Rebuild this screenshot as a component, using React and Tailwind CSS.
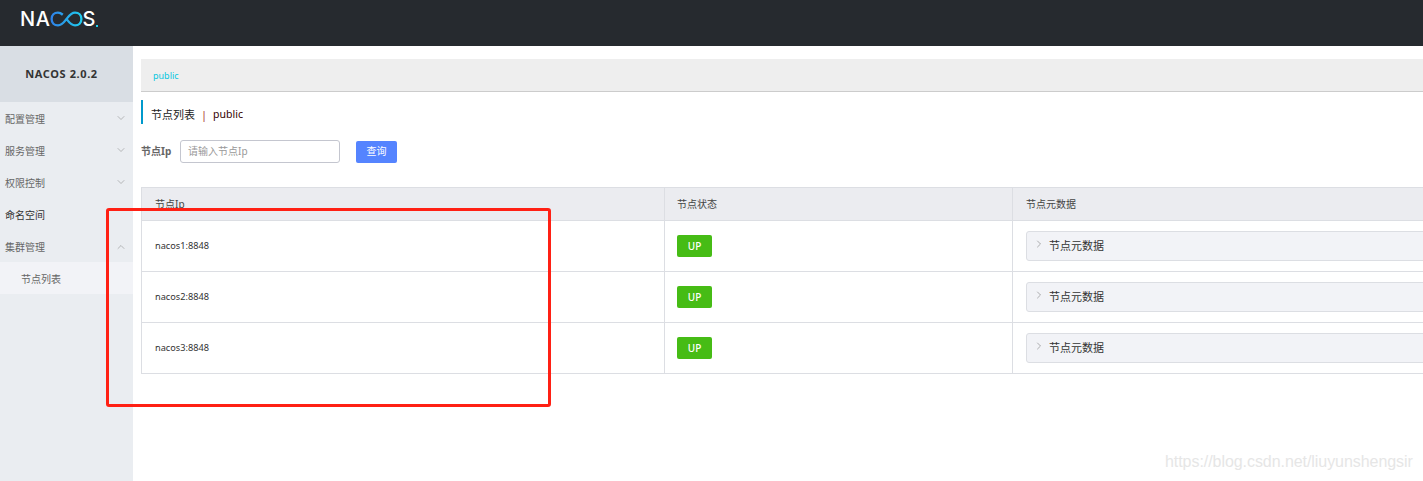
import React from "react";
import { ChevronDown, ChevronUp, ChevronRight } from "lucide-react";

const FONT = "[font-family:'Noto_Sans','Noto_Sans_CJK_SC',sans-serif]";

function Logo() {
  return (
    <div className="flex items-center h-[46px] pl-[20px] pb-[9px] text-white">
      <span className="text-[20px] leading-none font-medium tracking-[0.6px] [font-family:'Inter',sans-serif]">NA</span>
      <svg width="33" height="16" viewBox="0 0 31 15" fill="none" className="-ml-[1px]">
        <defs>
          <linearGradient id="logoG" x1="0" y1="0" x2="31" y2="0" gradientUnits="userSpaceOnUse">
            <stop offset="0" stopColor="#2f7fe8" />
            <stop offset="1" stopColor="#1fd0ee" />
          </linearGradient>
        </defs>
        <path
          d="M12 3.5C10.5 2.2 9 1.5 7.5 1.5C4 1.5 1.5 4 1.5 7.5S4 13.5 7.5 13.5C11.5 13.5 13.5 10 15.5 7.5C17.5 5 19.5 1.5 23.5 1.5C27 1.5 29.5 4 29.5 7.5S27 13.5 23.5 13.5C19.5 13.5 17.5 10 15.5 7.5"
          stroke="url(#logoG)"
          strokeWidth="2.2"
        />
      </svg>
      <span className="text-[20px] leading-none font-medium [font-family:'Inter',sans-serif]">S</span>
      <span className="w-[2px] h-[2px] bg-[#1fd0ee] self-end mb-[10px] ml-[1px]" />
    </div>
  );
}

function MenuItem({ label, icon, dark }) {
  return (
    <div className={`flex items-center justify-between h-[32px] pl-[5px] pr-[6px] text-[10px] ${dark ? "text-[#333]" : "text-[#666]"}`}>
      <span>{label}</span>
      {icon === "down" && <ChevronDown size={12} strokeWidth={1.1} className="text-[#888] -mt-[3px]" />}
      {icon === "up" && <ChevronUp size={12} strokeWidth={1.1} className="text-[#888]" />}
    </div>
  );
}

function Row({ ip }) {
  return (
    <div className="grid grid-cols-[523px_348px_1fr] h-[51px] border-b border-[#dcdee3]">
      <div className="flex items-center pl-[13px] text-[9.2px] text-[#333] border-r border-[#dcdee3]">{ip}</div>
      <div className="flex items-center pl-[12px] border-r border-[#dcdee3]">
        <span className="flex items-center justify-center w-[35px] h-[22px] rounded-[2px] bg-[#46bc15] text-white text-[10px] font-medium">UP</span>
      </div>
      <div className="flex items-center pl-[13px]">
        <div className="flex items-center w-full h-[30px] bg-[#f2f3f7] border border-[#dcdee3] rounded-[3px] pl-[6px] text-[11px] text-[#333]">
          <ChevronRight size={12} strokeWidth={1} className="text-[#666] -mt-[5px]" />
          <span className="ml-[4px]">节点元数据</span>
        </div>
      </div>
    </div>
  );
}

export default function App() {
  return (
    <div className={`relative w-[1423px] h-[481px] overflow-hidden bg-white ${FONT}`}>
      <header className="h-[46px] bg-[#262a2f]">
        <Logo />
      </header>
      <div className="flex h-[435px]">
        <aside className="w-[133px] shrink-0 bg-[#eaedf1]">
          <div className="flex items-center justify-center h-[56px] pr-[10px] bg-[#d9dee4] text-[11px] font-bold tracking-[0.6px] text-[#333]">
            NACOS 2.0.2
          </div>
          <div className="pt-px">
            <MenuItem label="配置管理" icon="down" />
            <MenuItem label="服务管理" icon="down" />
            <MenuItem label="权限控制" icon="down" />
            <MenuItem label="命名空间" dark />
            <MenuItem label="集群管理" icon="up" />
            <div className="flex items-center h-[32px] -mt-px pl-[21px] pt-[3px] bg-[#f2f3f7] text-[10px] text-[#666]">节点列表</div>
          </div>
        </aside>
        <main className="flex-1 min-w-0 overflow-hidden pl-[8px] pt-[13px]">
          <div className="w-[1400px]">
            <div className="flex items-center h-[33px] pl-[12px] pt-[2px] bg-[#eee] border-b border-[#ccc] text-[9px] text-[#09c7de]">public</div>
            <div className="flex items-center h-[24px] mt-[8px] border-l-[2px] border-[#09c] pl-[8px] pt-[6px] text-[11px] text-[#222]">
              <span>节点列表</span>
              <span className="mx-[6px] text-[#a33]">|</span>
              <span className="text-[#300] text-[10.5px]">public</span>
            </div>
            <div className="flex items-center mt-[16px] h-[23px]">
              <span className="w-[39px] text-[10px] font-bold text-[#666]">节点Ip</span>
              <div className="flex items-center w-[160px] h-[23px] pl-[7px] border border-[#c4c6cf] rounded-[3px] text-[10px] text-[#999]">请输入节点Ip</div>
              <button className="ml-[16px] w-[41px] h-[22px] rounded-[2px] bg-[#5584ff] text-white text-[10px]">查询</button>
            </div>
            <div className="mt-[24px] border-l border-t border-[#dcdee3]">
              <div className="grid grid-cols-[523px_348px_1fr] h-[33px] bg-[#ebecf0] border-b border-[#dcdee3] text-[10px] text-[#444]">
                <div className="flex items-center pl-[13px] border-r border-[#dcdee3]">节点Ip</div>
                <div className="flex items-center pl-[12px] border-r border-[#dcdee3]">节点状态</div>
                <div className="flex items-center pl-[13px]">节点元数据</div>
              </div>
              <Row ip="nacos1:8848" />
              <Row ip="nacos2:8848" />
              <Row ip="nacos3:8848" />
            </div>
          </div>
        </main>
      </div>
      <div className="absolute left-[106px] top-[208px] w-[445px] h-[199px] border-[3px] border-[#ff2014] rounded-[3px]" />
      <div className="absolute left-[1165px] top-[452px] text-[16px] leading-[20px] tracking-[-0.06px] text-[#e6e6e6] [font-family:'Liberation_Sans',sans-serif]">
        https://blog.csdn.net/liuyunshengsir
      </div>
    </div>
  );
}
